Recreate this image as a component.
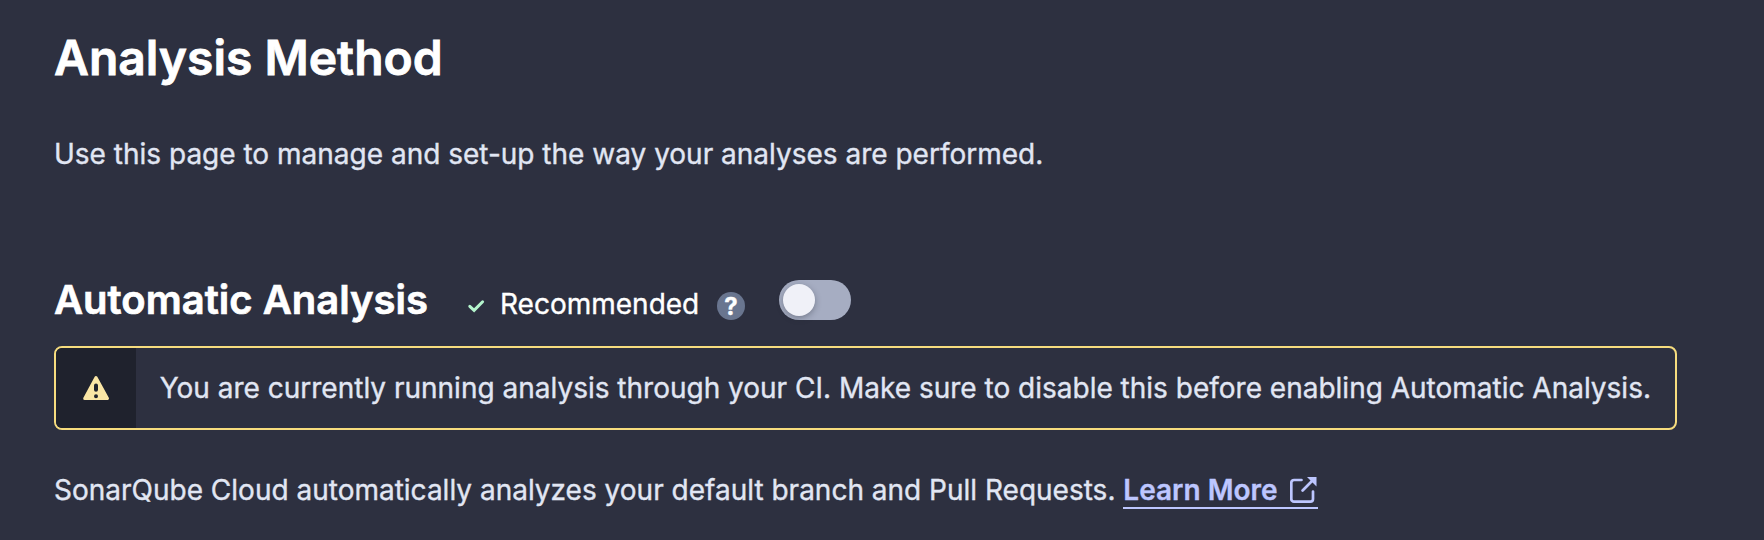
<main>
  <h1>Analysis Method</h1>
  <p class="intro">Use this page to manage and set-up the way your analyses are performed.</p>
  <div class="head">
    <h2>Automatic Analysis</h2>
    <div class="badge">
      <svg class="check" width="20" height="20" viewBox="0 0 20 20"><path d="M4.800 10.300 9.100 14.300 17.600 5.800" /></svg>
      <span class="rec">Recommended</span>
      <span class="help">?</span>
    </div>
    <button class="toggle" aria-label="Automatic Analysis"><span></span></button>
  </div>
  <div class="banner">
    <div class="ico"><svg width="28" height="28" viewBox="0 0 28 28"><path fill="#fae6a5" stroke="#fae6a5" stroke-width="3" stroke-linejoin="round" d="M14 3.5 25.500 24.5H2.700Z" /><path stroke="#1f222d" stroke-width="4" stroke-linecap="round" d="M14 11.400v4.400M14 22.200v.05" /></svg></div>
    <div class="msg">You are currently running analysis through your CI. Make sure to disable this before enabling Automatic Analysis.</div>
  </div>
  <p class="foot">SonarQube Cloud automatically analyzes your default branch and Pull Requests. <a href="#learn">Learn More<svg width="28" height="28" viewBox="0 0 28 28"><path d="M11.5 4H4a2.7 2.7 0 0 0-2.7 2.7V23A2.7 2.7 0 0 0 4 25.7h16.300a2.700 2.700 0 0 0 2.700-2.700v-7.500M12.600 14.500 22 5" /><path class="tip" d="M17 1h9.500v9.500Z" /></svg></a></p>
</main>

<style>
  :global(body) { background: #2d3040; }
  main { box-sizing: border-box; width: 1764px; height: 540px; overflow: hidden; padding: 28px 54px 0; font-family: Inter, sans-serif; font-size: 28px; line-height: 40px; color: #e1e6f3; -webkit-text-stroke: 0.35px currentColor; }
  h1, h2, p { margin: 0; white-space: nowrap; }
  h1 { font-size: 48px; line-height: 60px; font-weight: 600; color: #fff; -webkit-text-stroke-width: 0.8px; }
  .intro { margin-top: 46px; }
  .head { display: flex; align-items: center; height: 60px; margin-top: 96px; }
  h2 { font-size: 40px; font-weight: 600; color: #fff; width: 411px; -webkit-text-stroke-width: 0.7px; }
  .badge { display: flex; align-items: center; padding-top: 8px; color: #fff; }
  .check { margin-top: 3px; fill: none; stroke: #b4f5cd; stroke-width: 3; stroke-linecap: round; }
  .rec { width: 217px; margin-left: 15px; }
  .help { width: 28px; height: 28px; margin-top: 4px; border-radius: 50%; background: #69758f; color: #fff; font-size: 24px; font-weight: 700; line-height: 29px; text-align: center; }
  .toggle { width: 72px; height: 40px; margin-left: 34px; padding: 4px; border: 0; border-radius: 20px; background: #a6adc2; }
  .toggle span { display: block; width: 32px; height: 32px; border-radius: 50%; background: #f0f1f8; box-shadow: 0 2px 6px rgba(29, 33, 47, 0.35); }
  .banner { box-sizing: border-box; display: flex; width: 1623px; height: 84px; margin-top: 16px; border: 2px solid #f6dc7e; border-radius: 8px; overflow: hidden; }
  .ico { display: flex; width: 80px; align-items: center; justify-content: center; background: #1f222d; }
  .msg { padding: 20px 24px; white-space: nowrap; }
  .foot { margin-top: 40px; }
  a { display: inline-flex; align-items: center; gap: 12px; height: 34px; line-height: 34px; color: #bdc6ff; font-weight: 600; text-decoration: none; border-bottom: 2px solid; }
  a svg { fill: none; stroke: currentColor; stroke-width: 2.7; stroke-linecap: round; }
  .tip { fill: currentColor; stroke: none; }
</style>
